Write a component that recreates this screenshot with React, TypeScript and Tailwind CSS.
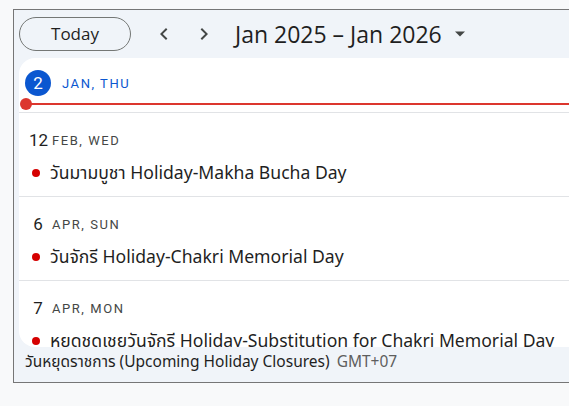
import React from "react";

const sans = { fontFamily: '"Open Sans", Roboto, "Noto Sans", sans-serif' };
const rob = { fontFamily: 'Roboto, "Noto Sans", sans-serif' };
const thai = { fontFamily: '"Noto Sans", "Noto Sans Thai", sans-serif' };

function DateRow({
  num,
  label,
  title,
}: {
  num: string;
  label: string;
  title: string;
}) {
  return (
    <div className="h-[84px] shrink-0 border-t border-[#e1e3e6] flex flex-col">
      <div className="flex items-center h-[54px] shrink-0 pl-[10px]">
        <div className="w-[18px] text-center text-[17px] text-[#1f1f1f] leading-none" style={rob}>
          {num}
        </div>
        <div
          className="ml-[5px] text-[13px] tracking-[0.12em] text-[#444746] leading-none"
          style={rob}
        >
          {label}
        </div>
      </div>
      <div className="flex items-center h-[12px] shrink-0 pl-[13px] whitespace-nowrap">
        <span className="w-[8px] h-[8px] rounded-full bg-[#d50000] shrink-0" />
        <span className="ml-[10px] text-[17.6px] text-[#1f1f1f] leading-none" style={thai}>
          {title}
        </span>
      </div>
    </div>
  );
}

export default function App() {
  return (
    <div className="w-[569px] h-[406px] bg-[#f8f9fa] pt-[9px] pl-[13px] overflow-hidden">
      <div className="w-[600px] h-[374px] border border-[#767676] bg-[#f0f4f9] flex flex-col">
        {/* header */}
        <div className="h-[48px] flex items-center pl-[5px] shrink-0">
          <button
            className="w-[112px] h-[34px] rounded-full border border-[#747775] text-[17px] text-[#1f1f1f] flex items-center justify-center"
            style={sans}
          >
            Today
          </button>
          <div className="ml-[21px] w-[24px] h-[24px] flex items-center justify-center">
            <svg width="24" height="24" viewBox="0 0 24 24">
              <path d="M15.4 7.4 14 6l-6 6 6 6 1.4-1.4L10.8 12z" fill="#444746" />
            </svg>
          </div>
          <div className="ml-[16px] w-[24px] h-[24px] flex items-center justify-center">
            <svg width="24" height="24" viewBox="0 0 24 24">
              <path d="M8.6 16.6 10 18l6-6-6-6-1.4 1.4 4.6 4.6z" fill="#444746" />
            </svg>
          </div>
          <div
            className="ml-[19px] text-[23px] text-[#1f1f1f] leading-none whitespace-nowrap"
            style={sans}
          >
            Jan 2025 – Jan 2026
          </div>
          <svg className="ml-[12px]" width="12" height="8" viewBox="0 0 12 8">
            <path d="M1 1.5h10L6 6.5z" fill="#444746" />
          </svg>
        </div>

        {/* card */}
        <div className="ml-[5px] h-[289px] bg-white rounded-[16px] overflow-hidden flex flex-col shrink-0">
          <div className="h-[54px] relative shrink-0">
            <div className="flex items-center pl-[6px] pt-[12px]">
              <div
                className="w-[26px] h-[26px] rounded-full bg-[#0b57d0] text-white text-[17px] flex items-center justify-center leading-none"
                style={rob}
              >
                2
              </div>
              <div
                className="ml-[11px] text-[13px] tracking-[0.12em] text-[#0b57d0] leading-none"
                style={rob}
              >
                JAN, THU
              </div>
            </div>
            <div className="absolute left-[7px] right-0 top-[45px] h-[2px] bg-[#dc362e]" />
            <div className="absolute left-[1px] top-[40px] w-[12px] h-[12px] rounded-full bg-[#dc362e]" />
          </div>
          <DateRow num="12" label="FEB, WED" title="วันมามบูชา Holiday-Makha Bucha Day" />
          <DateRow num="6" label="APR, SUN" title="วันจักรี Holiday-Chakri Memorial Day" />
          <DateRow
            num="7"
            label="APR, MON"
            title="หยุดชดเชยวันจักรี Holiday-Substitution for Chakri Memorial Day"
          />
        </div>

        {/* footer */}
        <div
          className="pl-[11px] pt-[4px] flex items-center text-[15.5px] whitespace-nowrap leading-[20px]"
          style={thai}
        >
          <span className="text-[#1f1f1f]">วันหยุดราชการ (Upcoming Holiday Closures)</span>
          <span className="ml-[7px] text-[#5e5e5e]">GMT+07</span>
        </div>
      </div>
    </div>
  );
}
